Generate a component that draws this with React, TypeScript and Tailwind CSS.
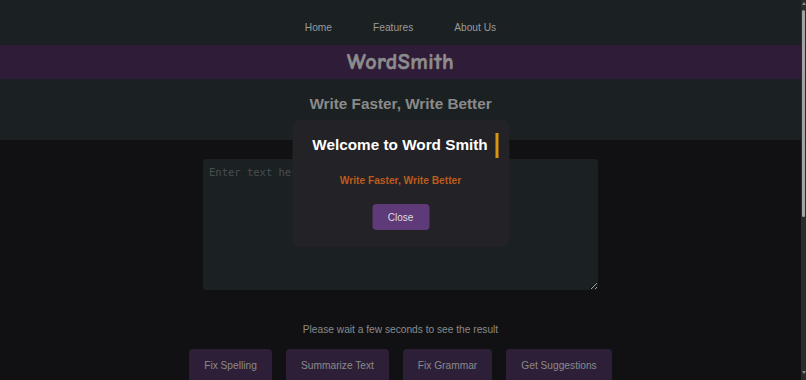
import React from "react";

export default function App() {
  const buttons = [
    { label: "Fix Spelling", w: "w-[83px]" },
    { label: "Summarize Text", w: "w-[103px]" },
    { label: "Fix Grammar", w: "w-[89px]" },
    { label: "Get Suggestions", w: "w-[106px]" },
  ];
  return (
    <div
      className="h-[380px] flex overflow-hidden bg-[#111113]"
      style={{ fontFamily: '"Liberation Sans", Arial, sans-serif' }}
    >
      <div className="relative flex-1 min-w-0">
        <nav className="h-[45px] bg-[#1b2022] flex items-center justify-center gap-[41px] pt-[10px] text-[10.2px] text-[#9a9a9a]">
          <span>Home</span>
          <span>Features</span>
          <span>About Us</span>
        </nav>
        <div className="h-[34px] bg-[#2f1c38] flex items-center justify-center">
          <span
            className="text-[22px] font-bold text-[#8c8c8c] tracking-[0.5px] [-webkit-text-stroke:0.6px_#8c8c8c]"
            style={{ fontFamily: '"Comic Sans MS", "Comic Neue", "DejaVu Sans", cursive' }}
          >
            WordSmith
          </span>
        </div>
        <div className="h-[61px] bg-[#1b2022] flex justify-center pt-[14px]">
          <span className="text-[15.3px] font-bold text-[#8a8a8a]">Write Faster, Write Better</span>
        </div>
        <main className="flex flex-col items-center pt-[19px]">
          <textarea
            placeholder="Enter text here"
            className="w-[395px] h-[131px] bg-[#1b2022] rounded-[3px] px-[6px] py-[6px] text-[10.5px] text-[#aaa] placeholder:text-[#4a4d4f] outline-none resize-y"
            style={{ fontFamily: '"DejaVu Sans Mono", "Liberation Mono", monospace' }}
          />
          <p className="mt-[32px] text-[10.2px] text-[#8a8a8a]">Please wait a few seconds to see the result</p>
          <div className="mt-[12px] flex gap-[14px]">
            {buttons.map((b) => (
              <button
                key={b.label}
                className={`${b.w} h-[36px] rounded-[4px] bg-[#2e1f38] text-[10.2px] text-[#8a8a8a] flex justify-center pt-[9px]`}
              >
                {b.label}
              </button>
            ))}
          </div>
        </main>

        <div className="absolute top-[120px] left-1/2 -translate-x-1/2 w-[217px] h-[127px] rounded-[8px] bg-[#232226] flex flex-col items-center">
          <div className="mt-[13px] flex items-center gap-[8px] pl-[10px] whitespace-nowrap">
            <span className="text-[15.3px] font-bold text-white">Welcome to Word Smith</span>
            <span className="w-[3px] h-[25px] bg-[#d99410]" />
          </div>
          <p className="mt-[15px] text-[10.2px] font-bold text-[#bd5a1c] whitespace-nowrap">Write Faster, Write Better</p>
          <button className="mt-[16px] w-[57px] h-[26px] rounded-[4px] bg-[#5e3a78] text-[10px] text-[#dcdcdc]">
            Close
          </button>
        </div>
      </div>
      <div className="w-[5px] h-full bg-[#2b2b2b] flex flex-col items-center">
        <div className="mt-[2px] w-0 h-0 border-l-[2px] border-r-[2px] border-b-[3px] border-l-transparent border-r-transparent border-b-[#8a8a8a]" />
        <div className="mt-[5px] w-[3px] h-[207px] rounded-full bg-[#a3a3a3]" />
        <div className="mt-auto mb-[6px] w-0 h-0 border-l-[2px] border-r-[2px] border-t-[3px] border-l-transparent border-r-transparent border-t-[#8a8a8a]" />
      </div>
    </div>
  );
}
